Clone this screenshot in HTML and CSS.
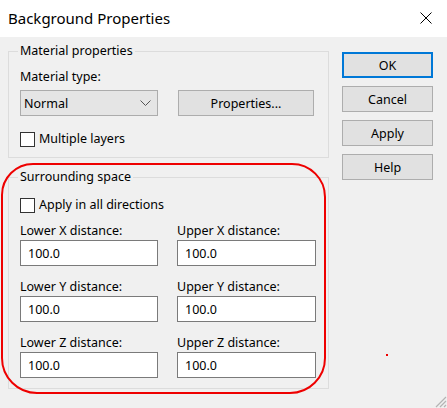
FILE: index.html
```html
<!DOCTYPE html>
<html>
<head>
<meta charset="utf-8">
<link rel="stylesheet" href="styles.css">
</head>
<body>
<div class="window">
  <div class="titlebar">
    <span class="title">Background Properties</span>
    <svg class="close" width="12" height="12" viewBox="0 0 12 12"><path d="M0.5 0.5 L11.5 11.5 M11.5 0.5 L0.5 11.5" stroke="#000" stroke-width="1" fill="none"/></svg>
  </div>
  <div class="content">
    <div class="left">
      <div class="group group-material">
        <div class="group-title">Material properties</div>
        <div class="label first">Material type:</div>
        <div class="row">
          <div class="combo"><span>Normal</span>
            <svg class="chev" width="11" height="6" viewBox="0 0 11 6"><path d="M0.5 0.5 L5.5 5.5 L10.5 0.5" stroke="#555" stroke-width="1" fill="none"/></svg>
          </div>
          <div class="btn btn-props">Properties...</div>
        </div>
        <div class="check-row"><span class="check"></span><span>Multiple layers</span></div>
      </div>
      <div class="group group-space">
        <div class="group-title">Surrounding space</div>
        <div class="check-row apply"><span class="check"></span><span>Apply in all directions</span></div>
        <div class="fields">
          <div class="field"><div class="label">Lower X distance:</div><div class="input">100.0</div></div>
          <div class="field"><div class="label">Upper X distance:</div><div class="input">100.0</div></div>
          <div class="field"><div class="label">Lower Y distance:</div><div class="input">100.0</div></div>
          <div class="field"><div class="label">Upper Y distance:</div><div class="input">100.0</div></div>
          <div class="field"><div class="label">Lower Z distance:</div><div class="input">100.0</div></div>
          <div class="field"><div class="label">Upper Z distance:</div><div class="input">100.0</div></div>
        </div>
      </div>
    </div>
    <div class="buttons">
      <div class="btn btn-side btn-default">OK</div>
      <div class="btn btn-side">Cancel</div>
      <div class="btn btn-side">Apply</div>
      <div class="btn btn-side">Help</div>
    </div>
  </div>
  <div class="highlight"></div>
  <div class="red-dot"></div>
  <svg class="grip" width="14" height="14" viewBox="0 0 14 14"><path d="M13 3 L3 13 M13 7 L7 13 M13 11 L11 13" stroke="#b4b4b4" stroke-width="1.2" fill="none"/></svg>
</div>
</body>
</html>
```
FILE: styles.css
```css
* { box-sizing: border-box; }
html, body { margin: 0; padding: 0; }
body {
  background: #f0f0f0;
  font-family: "Noto Sans", "DejaVu Sans", sans-serif;
  font-size: 12.5px;
  color: #000;
}
.window {
  position: relative;
  width: 447px;
  height: 408px;
  overflow: hidden;
  background: #f0f0f0;
}
.titlebar {
  height: 37px;
  background: #fff;
  display: flex;
  align-items: center;
  justify-content: space-between;
  padding: 0 15px 0 8px;
}
.title {
  font-size: 15px;
  line-height: 20px;
  margin-top: -1px;
}
.close { display: block; margin-top: -1px; }
.content {
  display: flex;
  padding-top: 14px;
}
.left {
  margin-left: 8px;
  width: 321px;
}
.group {
  border: 1px solid #dcdcdc;
  padding: 0 11px;
}
.group-title {
  width: fit-content;
  margin: -9px 0 0 -2px;
  padding: 0 2px;
  background: #f0f0f0;
  line-height: 16px;
}
.label { line-height: 16px; }
.label.first { margin-top: 10px; }
.row {
  display: flex;
  gap: 20px;
  margin-top: 5px;
}
.combo {
  width: 138px;
  height: 26px;
  background: #e5e5e5;
  border: 1px solid #acacac;
  display: flex;
  align-items: center;
  justify-content: space-between;
  padding: 0 6px 0 3px;
}
.chev { display: block; }
.btn {
  background: #e1e1e1;
  border: 1px solid #adadad;
  display: flex;
  align-items: center;
  justify-content: center;
}
.btn-props { width: 136px; height: 26px; }
.check-row {
  display: flex;
  align-items: center;
  gap: 4px;
  line-height: 16px;
}
.group-material .check-row { margin-top: 15px; padding-bottom: 10px; }
.check {
  width: 15px;
  height: 15px;
  background: #fff;
  border: 1px solid #333;
}
.group-space { margin-top: 19px; padding-bottom: 10px; }
.check-row.apply { margin-top: 12px; }
.fields {
  display: grid;
  grid-template-columns: 138px 139px;
  column-gap: 19px;
  row-gap: 13px;
  margin-top: 10px;
}
.field .label { margin-bottom: 1px; }
.input {
  height: 26px;
  background: #fff;
  border: 1px solid #7a7a7a;
  padding-left: 7px;
  display: flex;
  align-items: center;
}
.buttons {
  margin-left: 13px;
  margin-top: 1px;
  display: flex;
  flex-direction: column;
  gap: 8px;
}
.btn-side { width: 91px; height: 26px; }
.btn-default { border: 2px solid #0078d7; }
.highlight {
  position: absolute;
  left: 1px;
  top: 163px;
  width: 325px;
  height: 231px;
  border: 2px solid #ee0000;
  border-radius: 32px 34px 36px 36px;
}
.red-dot {
  position: absolute;
  left: 386px;
  top: 354px;
  width: 2px;
  height: 2px;
  background: #e00;
}
.grip { position: absolute; right: 0; bottom: 0; }
```
